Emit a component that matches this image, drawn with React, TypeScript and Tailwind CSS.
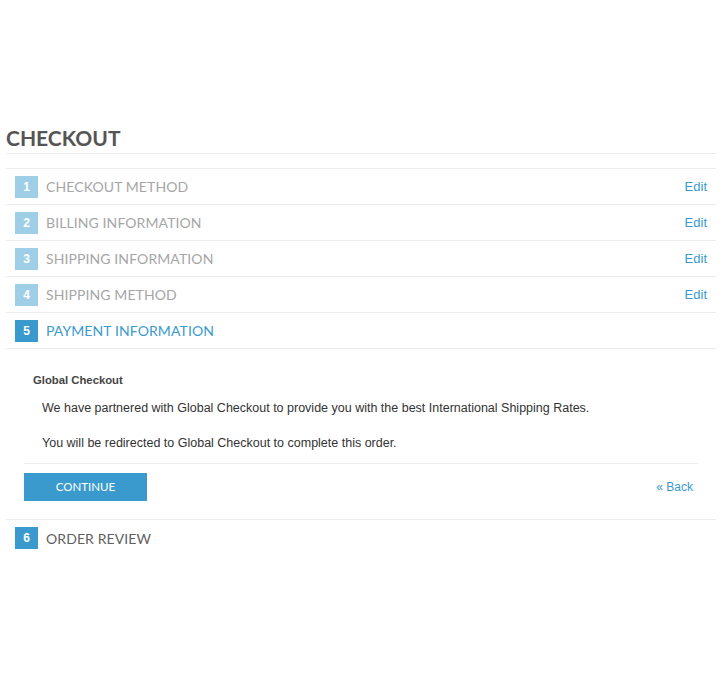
import React from "react";

type Step = {
  num: number;
  label: string;
  state: "done" | "active" | "todo";
};

const steps: Step[] = [
  { num: 1, label: "Checkout Method", state: "done" },
  { num: 2, label: "Billing Information", state: "done" },
  { num: 3, label: "Shipping Information", state: "done" },
  { num: 4, label: "Shipping Method", state: "done" },
  { num: 5, label: "Payment Information", state: "active" },
];

function StepRow({ step }: { step: Step }) {
  const badge = step.state === "done" ? "bg-[#9fcfe6]" : "bg-[#3a9acd]";
  const text =
    step.state === "done"
      ? "text-[#a6a6a6]"
      : step.state === "active"
        ? "text-[#3a9acd]"
        : "text-[#5f5f5f]";

  return (
    <div className="flex h-[36px] items-center border-b border-[#ececec] pl-[9px] pr-[9px]">
      <span
        className={`flex h-[22px] w-[23px] items-center justify-center text-[12px] font-bold text-white font-['Liberation_Sans',Arial,sans-serif] ${badge}`}
      >
        {step.num}
      </span>
      <span className={`ml-[8px] text-[14px] uppercase tracking-[0.1px] ${text}`}>
        {step.label}
      </span>
      {step.state === "done" && (
        <a className="ml-auto text-[13px] text-[#3a9acd] font-['Liberation_Sans',Arial,sans-serif]">
          Edit
        </a>
      )}
    </div>
  );
}

export default function App() {
  return (
    <div className="min-h-[680px] w-full bg-white pt-[123px] font-['Lato',sans-serif]">
      <div className="ml-[6px] w-[710px]">
        <h1 className="border-b border-[#ececec] pt-[2px] pb-[2px] text-[21px] font-bold leading-[26px] text-[#555]">
          CHECKOUT
        </h1>

        <div className="mt-[14px] border-t border-[#ececec]">
          {steps.map((s) => (
            <StepRow key={s.num} step={s} />
          ))}

          <div className="border-b border-[#ececec] px-[18px] pb-[18px] font-['Liberation_Sans',Arial,sans-serif] text-[#333]">
            <h3 className="mt-[23px] pl-[9px] text-[11.3px] font-bold leading-[16px] text-[#444]">
              Global Checkout
            </h3>
            <p className="mt-[11px] pl-[18px] text-[12.5px] leading-[18px]">
              We have partnered with Global Checkout to provide you with the best International Shipping Rates.
            </p>
            <p className="mt-[17px] pl-[18px] text-[12.5px] leading-[18px]">
              You will be redirected to Global Checkout to complete this order.
            </p>
            <div className="mt-[11px] flex items-center justify-between border-t border-[#ececec] pt-[9px] pr-[5px]">
              <button className="h-[28px] w-[123px] bg-[#3a9acd] text-[11.5px] text-white font-['Lato',sans-serif]">
                CONTINUE
              </button>
              <a className="text-[12px] text-[#3a9acd]">« Back</a>
            </div>
          </div>

          <div className="flex h-[36px] items-center pl-[9px] pr-[9px]">
            <span className="flex h-[22px] w-[23px] items-center justify-center bg-[#3a9acd] text-[12px] font-bold text-white font-['Liberation_Sans',Arial,sans-serif]">
              6
            </span>
            <span className="ml-[8px] text-[14px] uppercase tracking-[0.1px] text-[#5f5f5f]">
              Order Review
            </span>
          </div>
        </div>
      </div>
    </div>
  );
}
